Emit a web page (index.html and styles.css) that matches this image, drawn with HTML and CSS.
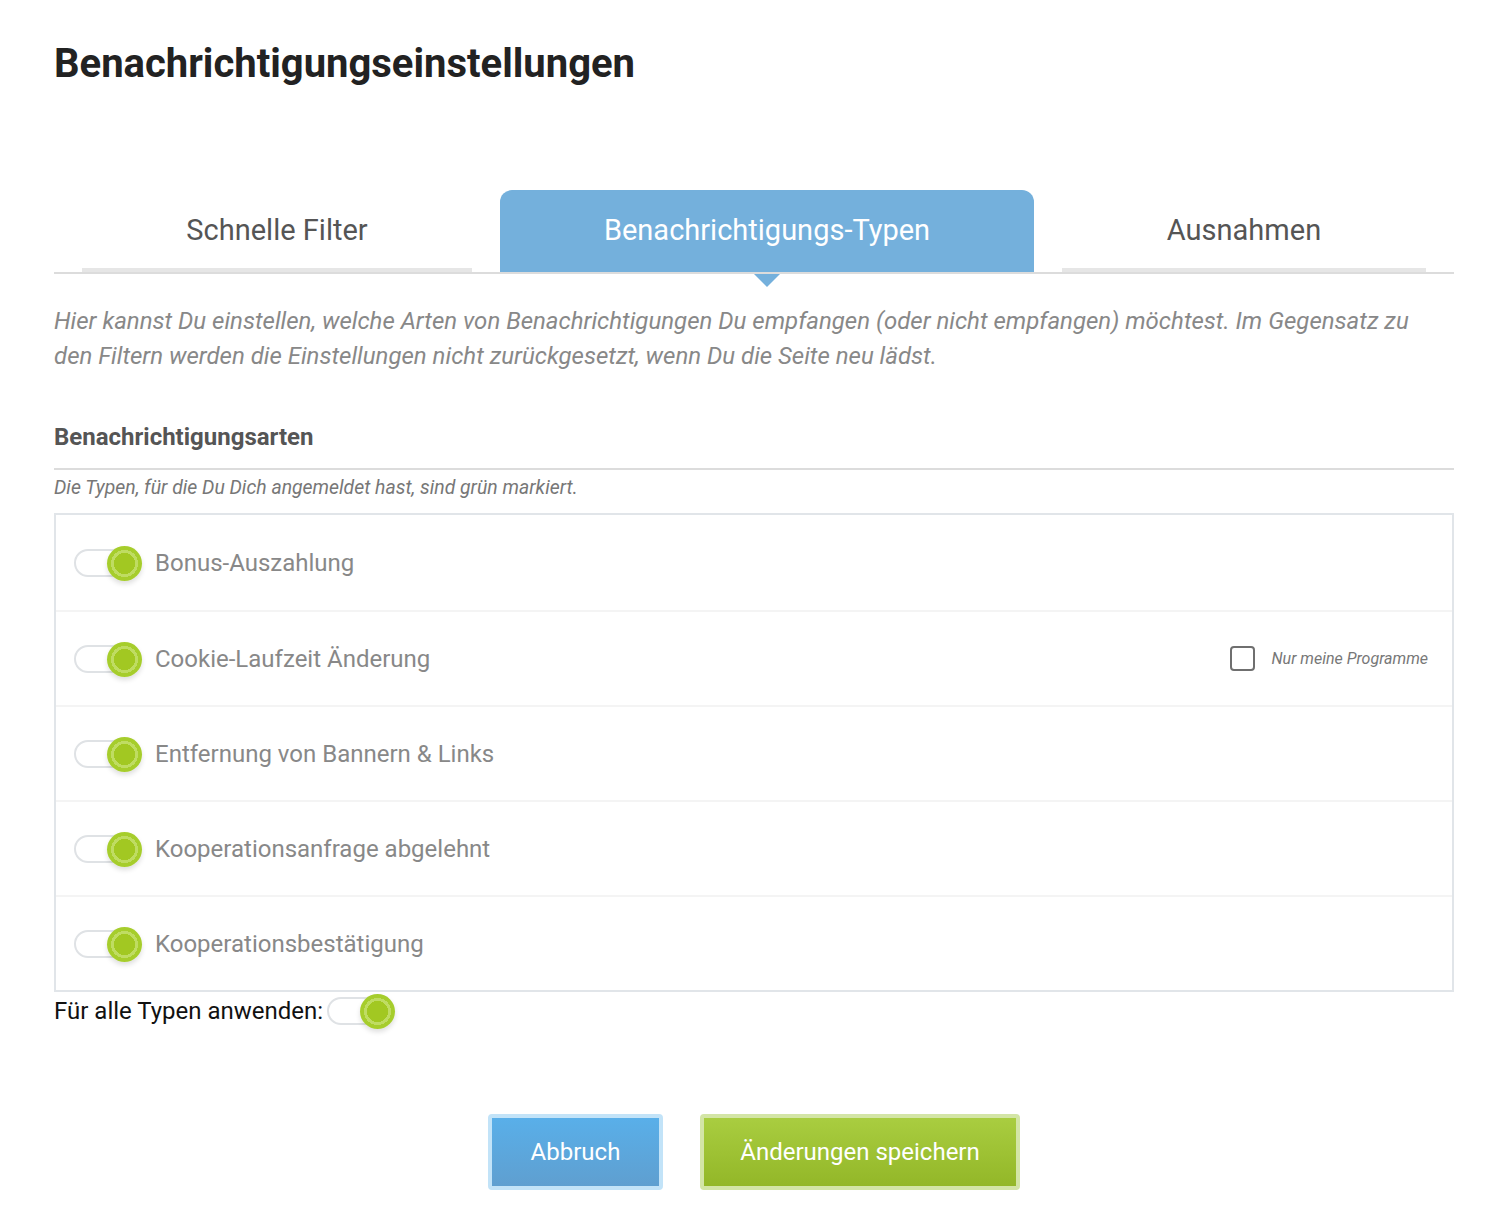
FILE: index.html
```html
<!DOCTYPE html>
<html lang="de">
<head>
<meta charset="utf-8">
<title>Benachrichtigungseinstellungen</title>
<link rel="stylesheet" href="styles.css">
</head>
<body>
<div class="page">
  <h1 class="title">Benachrichtigungseinstellungen</h1>

  <div class="tabs">
    <div class="tab tab-first"><span>Schnelle Filter</span></div>
    <div class="tab tab-active"><span>Benachrichtigungs-Typen</span></div>
    <div class="tab tab-last"><span>Ausnahmen</span></div>
  </div>

  <p class="intro">Hier kannst Du einstellen, welche Arten von Benachrichtigungen Du empfangen (oder nicht empfangen) möchtest. Im Gegensatz zu den Filtern werden die Einstellungen nicht zurückgesetzt, wenn Du die Seite neu lädst.</p>

  <h2 class="section-title">Benachrichtigungsarten</h2>
  <p class="hint">Die Typen, für die Du Dich angemeldet hast, sind grün markiert.</p>

  <div class="type-list">
    <div class="type-row">
      <span class="toggle"><span class="knob"></span></span>
      <span class="type-label">Bonus-Auszahlung</span>
    </div>
    <div class="type-row">
      <span class="toggle"><span class="knob"></span></span>
      <span class="type-label">Cookie-Laufzeit Änderung</span>
      <label class="only-mine"><span class="checkbox"></span><span class="only-text">Nur meine Programme</span></label>
    </div>
    <div class="type-row">
      <span class="toggle"><span class="knob"></span></span>
      <span class="type-label">Entfernung von Bannern &amp; Links</span>
    </div>
    <div class="type-row">
      <span class="toggle"><span class="knob"></span></span>
      <span class="type-label">Kooperationsanfrage abgelehnt</span>
    </div>
    <div class="type-row">
      <span class="toggle"><span class="knob"></span></span>
      <span class="type-label">Kooperationsbestätigung</span>
    </div>
  </div>

  <div class="apply-all">
    <span class="apply-label">Für alle Typen anwenden:</span>
    <span class="toggle"><span class="knob"></span></span>
  </div>

  <div class="actions">
    <button class="btn btn-cancel">Abbruch</button>
    <button class="btn btn-save">Änderungen speichern</button>
  </div>
</div>
</body>
</html>
```

FILE: styles.css
```css
* { box-sizing: border-box; }

html, body {
  margin: 0;
  padding: 0;
  background: #ffffff;
}

body {
  font-family: Roboto, "Liberation Sans", Arial, sans-serif;
  color: #222;
}

.page {
  width: 1492px;
  padding: 0 38px 0 54px;
}

.title {
  margin: 0;
  padding-top: 38px;
  font-size: 40px;
  line-height: 52px;
  font-weight: 700;
  color: #222;
}

.tabs {
  margin-top: 100px;
  display: grid;
  grid-template-columns: 446px 534px 1fr;
  height: 84px;
  border-bottom: 2px solid #dcdcdc;
}

.tab {
  display: flex;
  align-items: flex-start;
  justify-content: center;
  font-size: 29px;
  line-height: 34px;
  color: #555;
  padding-top: 23px;
  position: relative;
}

.tab-first, .tab-last {
  margin: 0 28px;
  border-bottom: 4px solid #e6e6e6;
}

.tab-active {
  background: #74b0dc;
  color: #fff;
  border-radius: 12px 12px 0 0;
}

.tab-active::after {
  content: "";
  position: absolute;
  left: 50%;
  bottom: -15px;
  margin-left: -13px;
  border-left: 13px solid transparent;
  border-right: 13px solid transparent;
  border-top: 13px solid #74b0dc;
}

.intro {
  margin: 30px 0 0;
  padding-right: 24px;
  font-size: 24px;
  line-height: 35px;
  font-style: italic;
  color: #888;
}

.section-title {
  margin: 48px 0 0;
  padding-bottom: 16px;
  font-size: 24px;
  line-height: 30px;
  font-weight: 700;
  color: #555;
  border-bottom: 2px solid #dcdcdc;
}

.hint {
  margin: 6px 0 0;
  font-size: 19.4px;
  line-height: 24px;
  font-style: italic;
  color: #777;
}

.type-list {
  margin-top: 13px;
  border: 2px solid #e1e5e9;
}

.type-row {
  display: flex;
  align-items: center;
  height: 95px;
  padding: 0 24px 0 18px;
  border-top: 2px solid #f4f4f4;
}

.type-row:first-child {
  border-top: none;
}

.toggle {
  position: relative;
  display: inline-block;
  width: 66px;
  height: 28px;
  border: 2px solid #dfe2e5;
  border-radius: 14px;
  background: #fff;
  flex: none;
}

.knob {
  position: absolute;
  right: -4px;
  top: -5px;
  width: 35px;
  height: 35px;
  border-radius: 50%;
  background: radial-gradient(circle, #a2c822 0 10.5px, #bfdc62 10.5px 13.5px, #a6cd2c 13.5px);
  box-shadow: 0 3px 5px rgba(0, 0, 0, 0.13);
}

.type-label {
  margin-left: 15px;
  font-size: 24px;
  line-height: 30px;
  color: #888;
}

.only-mine {
  margin-left: auto;
  display: flex;
  align-items: center;
}

.checkbox {
  width: 25px;
  height: 25px;
  border: 2px solid #6f6f6f;
  border-radius: 4px;
  background: #fff;
}

.only-text {
  margin-left: 17px;
  font-size: 16px;
  font-style: italic;
  color: #777;
}

.apply-all {
  display: flex;
  align-items: center;
  margin-top: 4px;
}

.apply-label {
  font-size: 24px;
  line-height: 30px;
  color: #111;
  margin-right: 4px;
}

.actions {
  display: flex;
  justify-content: center;
  gap: 37px;
  margin-top: 88px;
}

.btn {
  font-family: Roboto, "Liberation Sans", Arial, sans-serif;
  font-size: 24px;
  color: #fff;
  height: 76px;
  border-radius: 4px;
  cursor: pointer;
}

.btn-cancel {
  width: 175px;
  border: 4px solid #c2e3f8;
  background: linear-gradient(#59afe9, #5f9fd0);
}

.btn-save {
  width: 320px;
  border: 4px solid #d3e5a6;
  background: linear-gradient(#a9cd40, #93b728);
}
```
